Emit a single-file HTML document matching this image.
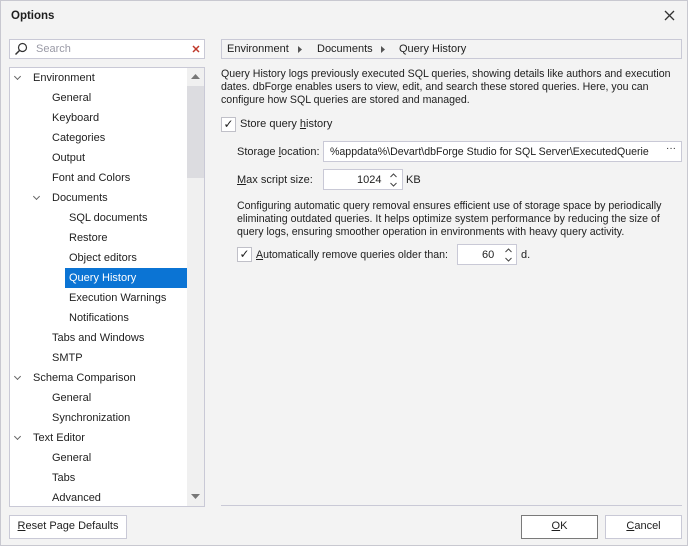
<!DOCTYPE html>
<html><head><style>
*{box-sizing:border-box;margin:0;padding:0}
body{width:688px;height:546px;background:#f0f0f0;font-family:"Liberation Sans",sans-serif;font-size:11px;color:#1e1e1e;position:relative;overflow:hidden}
.win{position:absolute;left:0;top:0;width:688px;height:546px;border:1px solid #c8c8d0;background:#f3f3f3}
.a{position:absolute;white-space:nowrap}
.box{position:absolute;background:#fff;border:1px solid #c9c9d6}
.row{position:absolute;height:20px;line-height:20px;white-space:nowrap}
.chev{position:absolute;width:5px;height:5px;border-right:1px solid #666;border-bottom:1px solid #666;transform:rotate(45deg)}
.btn{position:absolute;border:1px solid #c9c9d6;background:#fff;text-align:center;line-height:21px}
.cb{position:absolute;width:15px;height:15px;border:1px solid #c0c0c8;background:#fff;font-size:12px;line-height:13px;text-align:center}
u{text-decoration:underline}
.d{font-size:10.6px;line-height:13px}
</style></head><body><div class="win">
<div class="a" style="left:10px;top:9px;font-weight:bold;font-size:11.5px">Options</div>
<svg class="a" style="left:663px;top:9px" width="11" height="11"><path d="M1 1L10 10M10 1L1 10" stroke="#333" stroke-width="1.3"/></svg>

<div class="box" style="left:8px;top:38px;width:196px;height:20px"></div>
<svg class="a" style="left:13px;top:41px" width="14" height="14"><circle cx="8.5" cy="5.5" r="4" fill="none" stroke="#333" stroke-width="1.2"/><path d="M5.5 8.5L1.5 12.5" stroke="#333" stroke-width="1.5"/></svg>
<div class="a" style="left:35px;top:42px;color:#9a9aa6">Search</div>
<svg class="a" style="left:191px;top:44px" width="8" height="8"><path d="M1 1L7 7M7 1L1 7" stroke="#c0392b" stroke-width="1.5"/></svg>

<div class="box" style="left:8px;top:66px;width:196px;height:440px;overflow:hidden">
<div style="position:absolute;left:177px;top:0;width:17px;height:438px;background:#f0f0f0"></div>
<div style="position:absolute;left:177px;top:18px;width:17px;height:92px;background:#dcdce0"></div>
<svg style="position:absolute;left:181px;top:6px" width="9" height="6"><path d="M0 5L4.5 0L9 5Z" fill="#777"/></svg>
<svg style="position:absolute;left:181px;top:426px" width="9" height="6"><path d="M0 0L4.5 5L9 0Z" fill="#777"/></svg>
<div style="position:absolute;left:55px;top:200px;width:122px;height:20px;background:#0b74d4"></div>
</div>
<div id="tree"></div>

<div class="box" style="left:220px;top:38px;width:461px;height:20px;background:#f3f3f3"></div>
<div class="a" style="left:226px;top:42px">Environment</div>
<svg class="a" style="left:297px;top:45px" width="4" height="7"><path d="M0 0L4 3.5L0 7Z" fill="#555"/></svg>
<div class="a" style="left:316px;top:42px">Documents</div>
<svg class="a" style="left:380px;top:45px" width="4" height="7"><path d="M0 0L4 3.5L0 7Z" fill="#555"/></svg>
<div class="a" style="left:398px;top:42px">Query History</div>

<div class="a d" style="left:220px;top:67px">Query History logs previously executed SQL queries, showing details like authors and execution<br>dates. dbForge enables users to view, edit, and search these stored queries. Here, you can<br>configure how SQL queries are stored and managed.</div>

<div class="cb" style="left:220px;top:116px">✓</div>
<div class="a" style="left:239px;top:117px">Store query <u>h</u>istory</div>

<div class="a" style="left:236px;top:145px">Storage <u>l</u>ocation:</div>
<div class="box" style="left:322px;top:140px;width:359px;height:21px"></div>
<div class="a" style="left:329px;top:145px;width:328px;overflow:hidden;font-size:10.6px">%appdata%\Devart\dbForge Studio for SQL Server\ExecutedQuerie</div>
<div class="a" style="left:665px;top:142px;font-size:10px">···</div>

<div class="a" style="left:236px;top:173px"><u>M</u>ax script size:</div>
<div class="box" style="left:322px;top:168px;width:80px;height:21px"></div>
<div class="a" style="left:356px;top:173px">1024</div>
<svg class="a" style="left:389px;top:171px" width="7" height="16"><path d="M0.5 5L3.5 2L6.5 5M0.5 11L3.5 14L6.5 11" fill="none" stroke="#444"/></svg>
<div class="a" style="left:405px;top:173px">KB</div>

<div class="a d" style="left:236px;top:199px">Configuring automatic query removal ensures efficient use of storage space by periodically<br>eliminating outdated queries. It helps optimize system performance by reducing the size of<br>query logs, ensuring smoother operation in environments with heavy query activity.</div>

<div class="cb" style="left:236px;top:246px">✓</div>
<div class="a" style="left:255px;top:248px;font-size:10.6px"><u>A</u>utomatically remove queries older than:</div>
<div class="box" style="left:456px;top:243px;width:60px;height:21px"></div>
<div class="a" style="left:481px;top:248px">60</div>
<svg class="a" style="left:504px;top:246px" width="7" height="16"><path d="M0.5 5L3.5 2L6.5 5M0.5 11L3.5 14L6.5 11" fill="none" stroke="#444"/></svg>
<div class="a" style="left:520px;top:248px">d.</div>

<div class="a" style="left:220px;top:504px;width:461px;height:1px;background:#c9c9d6"></div>
<div class="btn" style="left:8px;top:514px;width:118px;height:24px"><u>R</u>eset Page Defaults</div>
<div class="btn" style="left:520px;top:514px;width:77px;height:24px;border-color:#7a7a7a"><u>O</u>K</div>
<div class="btn" style="left:604px;top:514px;width:77px;height:24px"><u>C</u>ancel</div>
</div>
<script>
var items=[[0,"Environment",1],[1,"General"],[1,"Keyboard"],[1,"Categories"],[1,"Output"],[1,"Font and Colors"],[1,"Documents",1],[2,"SQL documents"],[2,"Restore"],[2,"Object editors"],[2,"Query History"],[2,"Execution Warnings"],[2,"Notifications"],[1,"Tabs and Windows"],[1,"SMTP"],[0,"Schema Comparison",1],[1,"General"],[1,"Synchronization"],[0,"Text Editor",1],[1,"General"],[1,"Tabs"],[1,"Advanced"]];
var h="";items.forEach(function(it,i){var y=67+i*20;var x=[32,51,68][it[0]];
if(it[2])h+='<div class="chev" style="left:'+(x-18)+'px;top:'+(y+6)+'px"></div>';
h+='<div class="row" style="left:'+x+'px;top:'+y+'px;'+(it[1]=="Query History"?'color:#fff':'')+'">'+it[1]+'</div>';});
document.getElementById("tree").innerHTML=h;
</script>
</body></html>
